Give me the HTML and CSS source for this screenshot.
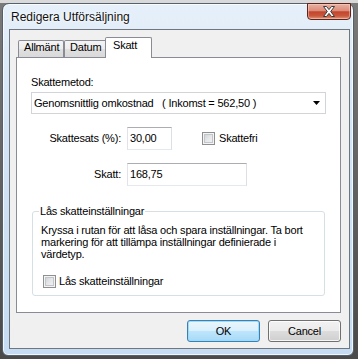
FILE: index.html
```html
<!DOCTYPE html>
<html lang="sv">
<head>
<meta charset="utf-8">
<title>Redigera Utförsäljning</title>
<link rel="stylesheet" href="styles.css">
</head>
<body>
<div class="window">
  <div class="titlebar">
    <span class="title">Redigera Utförsäljning</span>
    <div class="close">
      <svg width="12" height="11" viewBox="0 0 12 11"><polygon points="0.5,0.5 3.5,0.5 6,3.6 8.5,0.5 11.5,0.5 7.7,5.5 11.5,10.5 8.5,10.5 6,7.4 3.5,10.5 0.5,10.5 4.3,5.5" fill="#fff" stroke="#3b3b3b" stroke-width="1" stroke-linejoin="round"/></svg>
    </div>
  </div>
  <div class="client">
    <div class="tabs">
      <div class="tab t1">Allmänt</div>
      <div class="tab t2">Datum</div>
      <div class="tab active">Skatt</div>
    </div>
    <div class="panel">
      <div class="label">Skattemetod:</div>
      <div class="combo">
        <span class="combo-text">Genomsnittlig omkostnad   ( Inkomst = 562,50 )</span>
        <svg class="arrow" width="7" height="4" viewBox="0 0 7 4"><polygon points="0,0 7,0 3.5,4" fill="#000"/></svg>
      </div>
      <div class="row">
        <span class="rlabel">Skattesats (%):</span>
        <div class="input w45">30,00</div>
        <div class="check c1"><span class="box"></span><span>Skattefri</span></div>
      </div>
      <div class="row">
        <span class="rlabel">Skatt:</span>
        <div class="input w120">168,75</div>
      </div>
      <fieldset class="group">
        <legend>Lås skatteinställningar</legend>
        <p>Kryssa i rutan för att låsa och spara inställningar. Ta bort<br>markering för att tillämpa inställningar definierade i<br>värdetyp.</p>
        <div class="check c2"><span class="box"></span><span>Lås skatteinställningar</span></div>
      </fieldset>
    </div>
    <div class="buttons">
      <button class="btn default">OK</button>
      <button class="btn">Cancel</button>
    </div>
  </div>
</div>
</body>
</html>
```
FILE: styles.css
```css
html, body {
  margin: 0;
  width: 358px;
  height: 359px;
  overflow: hidden;
}
body {
  background: linear-gradient(180deg, #d9d9d9 0, #d9d9d9 3px, #7a7a7a 3px, #4a4a4a 100%);
  font-family: "Liberation Sans", Arial, sans-serif;
  color: #000;
}
.window {
  margin: 3px 0 0 2px;
  width: 352px;
  height: 353px;
  box-sizing: border-box;
  border: 1px solid #55616d;
  border-radius: 7px 7px 6px 6px;
  background: linear-gradient(180deg, #e6f0fa 0%, #d3e4f5 35%, #c6dcf2 100%);
  box-shadow: inset 0 0 0 1px rgba(255, 255, 255, 0.75);
  display: flex;
  flex-direction: column;
}
.titlebar {
  height: 25px;
  display: flex;
  padding: 0 2px 0 8px;
  flex-shrink: 0;
}
.title {
  font-size: 12px;
  line-height: 16px;
  margin-top: 5px;
  color: #111;
  text-shadow: 0 0 5px #fff, 0 0 2px #fff;
}
.close {
  margin-left: auto;
  margin-top: -1px;
  width: 44px;
  height: 17px;
  box-sizing: border-box;
  border: 1px solid #5e2419;
  border-radius: 0 0 4px 4px;
  background: linear-gradient(180deg, #e9b1a3 0%, #dc8c78 45%, #c4452b 52%, #c9583c 80%, #e29b80 100%);
  box-shadow: inset 0 0 0 1px rgba(255, 220, 210, 0.45);
  display: flex;
  align-items: center;
  justify-content: center;
  padding-bottom: 1px;
}
.close svg { display: block; }
.client {
  margin: 0 3px 6px 6px;
  height: 320px;
  box-sizing: border-box;
  border: 1px solid #6e7780;
  background: #f0f0f0;
  padding: 7px 8px 0 6px;
  font-size: 11px;
  line-height: 13px;
  letter-spacing: -0.2px;
}
.tabs {
  display: flex;
  align-items: flex-end;
  height: 20px;
  padding-left: 2px;
}
.tab {
  flex-shrink: 0;
  height: 17px;
  box-sizing: border-box;
  border: 1px solid #898c95;
  border-bottom: none;
  border-radius: 2px 2px 0 0;
  background: linear-gradient(180deg, #f4f4f4 0%, #ececec 50%, #e0e0e0 51%, #d9d9d9 100%);
  padding-left: 5px;
}
.t1 { width: 46px; }
.t2 { width: 43px; }
.tab.active {
  width: 47px;
  height: 21px;
  margin-left: -2px;
  margin-bottom: -1px;
  background: #fff;
  padding: 1px 0 0 7px;
  position: relative;
  z-index: 1;
}
.panel {
  height: 256px;
  box-sizing: border-box;
  border: 1px solid #898c95;
  background: #fff;
  padding: 18px 14px 0 14px;
}
.combo {
  margin-top: 3px;
  width: 295px;
  height: 22px;
  box-sizing: border-box;
  border: 1px solid #d2d4d8;
  display: flex;
  align-items: center;
  padding: 0 5px 0 2px;
  white-space: pre;
}
.arrow {
  margin-left: auto;
  display: block;
}
.row {
  display: flex;
  align-items: center;
  margin-top: 13px;
  height: 23px;
}
.rlabel {
  width: 90px;
  text-align: right;
}
.input {
  margin-left: 6px;
  height: 23px;
  box-sizing: border-box;
  border: 1px solid;
  border-color: #abadb3 #dbdfe6 #e3e9ef #e2e3ea;
  padding-left: 2px;
  display: flex;
  align-items: center;
}
.w45 { width: 45px; }
.w120 { width: 120px; }
.check {
  display: flex;
  align-items: center;
}
.box {
  width: 13px;
  height: 13px;
  box-sizing: border-box;
  border: 1px solid #8e8f8f;
  background: linear-gradient(135deg, #c9cdd2 0%, #e4e6e8 50%, #f6f6f6 100%);
  box-shadow: inset 0 0 0 1px #f4f4f4, inset 0 0 0 2px #c2c6cb;
  flex-shrink: 0;
}
.c1 { margin-left: 30px; gap: 4px; }
.c2 { margin: 15px 0 0 3px; gap: 3px; }
.group {
  margin: 19px 0 0 1px;
  width: 293px;
  min-width: 0;
  box-sizing: border-box;
  border: 1px solid #d5dfe5;
  border-radius: 3px;
  padding: 6px 7px 7px 7px;
}
.group legend {
  padding: 0 1px;
  margin-left: -1px;
  line-height: 13px;
}
.group p {
  margin: 0;
  padding-left: 1px;
  line-height: 12px;
}
.buttons {
  display: flex;
  justify-content: flex-end;
  gap: 8px;
  margin-top: 7px;
}
.btn {
  width: 73px;
  height: 22px;
  padding: 0;
  box-sizing: border-box;
  border: 1px solid #707070;
  border-radius: 3px;
  background: linear-gradient(180deg, #f2f2f2 0%, #ebebeb 49%, #dddddd 50%, #cfcfcf 100%);
  box-shadow: inset 0 0 0 1px rgba(255, 255, 255, 0.8);
  font-family: "Liberation Sans", Arial, sans-serif;
  font-size: 11px;
  letter-spacing: -0.2px;
  color: #000;
}
.btn.default {
  border-color: #3c7fb1;
  background: linear-gradient(180deg, #eaf6fd 0%, #d9f0fc 49%, #bee6fd 50%, #a7d9f5 100%);
  box-shadow: inset 0 0 0 1px #9ddcf8;
}
```
